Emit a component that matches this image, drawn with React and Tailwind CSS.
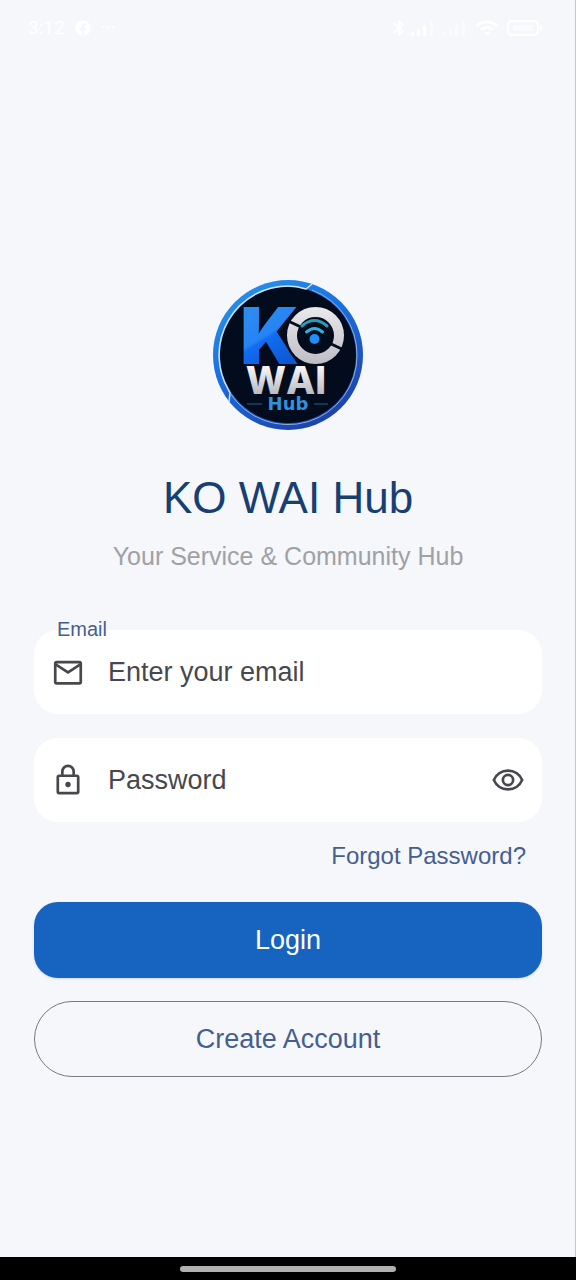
import React, { useState } from 'react';
import { FaFacebook } from 'react-icons/fa';
import { MdBluetooth, MdWifi } from 'react-icons/md';

function StatusBar() {
    return (
        <div className="h-14 pl-7 pr-8 flex items-center justify-between text-white font-[Roboto,sans-serif]">
            <div className="flex items-center gap-2.5">
                <span className="text-[19px] leading-6">3:12</span>
                <FaFacebook size={16} />
                <span className="text-[19px] leading-6">···</span>
            </div>
            <div className="flex items-center gap-2">
                <div className="flex items-center gap-0.5">
                    <MdBluetooth size={20} />
                    <svg width="24" height="16" viewBox="0 0 24 16" fill="currentColor">
                        <rect x="0" y="12" width="3" height="4" rx="1" />
                        <rect x="6" y="9" width="3" height="7" rx="1" />
                        <rect x="12" y="5" width="3" height="11" rx="1" />
                        <rect x="19" y="1" width="3" height="15" rx="1" opacity="0.5" />
                    </svg>
                </div>
                <svg width="24" height="16" viewBox="0 0 24 16" fill="currentColor" opacity="0.6">
                    <rect x="0" y="12" width="3" height="4" rx="1" />
                    <rect x="6" y="9" width="3" height="7" rx="1" />
                    <rect x="12" y="5" width="3" height="11" rx="1" />
                    <rect x="19" y="1" width="3" height="15" rx="1" />
                </svg>
                <MdWifi size={24} />
                <svg width="36" height="16" viewBox="0 0 36 16" fill="none" stroke="currentColor">
                    <rect x="1" y="1" width="30" height="14" rx="4" strokeWidth="2" />
                    <rect x="6" y="5" width="20" height="6" rx="1" fill="currentColor" stroke="none" opacity="0.5" />
                    <path d="M34 6v4" strokeWidth="2" strokeLinecap="round" />
                </svg>
            </div>
        </div>
    );
}

function Logo() {
    return (
        <svg
            className="w-[150px] h-[150px]"
            viewBox="0 0 150 150"
            role="img"
            aria-label="KO WAI Hub logo"
        >
            <defs>
                <linearGradient id="rim" x1="0" y1="0" x2="0.6" y2="1">
                    <stop offset="0" stopColor="#2a9af0" />
                    <stop offset="0.5" stopColor="#1a6fe0" />
                    <stop offset="1" stopColor="#1d44ae" />
                </linearGradient>
                <linearGradient id="blue" gradientUnits="userSpaceOnUse" x1="35" y1="28" x2="72" y2="90">
                    <stop offset="0" stopColor="#2f8cee" />
                    <stop offset="0.45" stopColor="#2584f4" />
                    <stop offset="0.5" stopColor="#126cf2" />
                    <stop offset="1" stopColor="#0d55cc" />
                </linearGradient>
                <linearGradient id="silver" gradientUnits="userSpaceOnUse" x1="0" y1="28" x2="0" y2="84">
                    <stop offset="0" stopColor="#e9e9ec" />
                    <stop offset="1" stopColor="#bdbdc4" />
                </linearGradient>
                <linearGradient id="word" gradientUnits="userSpaceOnUse" x1="0" y1="88" x2="0" y2="113">
                    <stop offset="0" stopColor="#f4f4f6" />
                    <stop offset="1" stopColor="#bcbcc4" />
                </linearGradient>
            </defs>

            <circle cx="75" cy="75" r="75" fill="url(#rim)" />
            <circle cx="75" cy="75" r="68" fill="#020c1c" />
            <path
                d="M99 4L93 9C87 7 81 6 75 6A69 69 0 0 0 15 109L17 113L16 122"
                fill="none"
                stroke="#d5e1ee"
                strokeWidth="1.5"
            />
            <path
                d="M17 113A69 69 0 0 0 144 75A69 69 0 0 0 99 10"
                fill="none"
                stroke="#8eb0dc"
                strokeWidth="1"
            />

            <text x="27" y="84" fontFamily="Inter, sans-serif" fontWeight="900" fontSize="78" fill="url(#blue)">K</text>

            {/* broken ring with the signal inside */}
            <circle cx="102.5" cy="55.5" r="31" fill="#020c1c" />
            <circle cx="102.5" cy="55.5" r="23.500" fill="none" stroke="url(#silver)" strokeWidth="10" />
            <path d="M73 40L90 48M114 62L133 71" stroke="#020c1c" strokeWidth="3" />
            <g fill="none" strokeLinecap="round" strokeWidth="3">
                <path d="M89 46Q101.500 35 114 46" stroke="#249fb5" />
                <path d="M93.500 52Q101.500 45 109.500 52" stroke="#2fb3dc" />
            </g>
            <circle cx="101.500" cy="59" r="5" fill="#1f8dfa" />

            <text
                x="73"
                y="114"
                textAnchor="middle"
                fontFamily="Inter, sans-serif"
                fontWeight="800"
                fontSize="38"
                style={{ fontKerning: 'none' }}
                fill="url(#word)"
            >
                WAI
            </text>
            <text x="75" y="130" textAnchor="middle" fontFamily="'DejaVu Sans', sans-serif" fontWeight="700" fontSize="18" fill="#3291dd">
                Hub
            </text>
            <path d="M34 124H49M101 124H115" stroke="#2b5c96" strokeWidth="1" />
        </svg>
    );
}

function MailIcon() {
    return (
        <svg className="size-[34px] shrink-0" viewBox="0 0 24 24" fill="none" stroke="currentColor" strokeWidth="1.9">
            <rect x="3" y="5" width="18" height="15" rx="1" />
            <path d="M3 6.500L12 12.300L21 6.500" />
        </svg>
    );
}

function LockIcon() {
    return (
        <svg className="size-[34px] shrink-0" viewBox="0 0 24 24" fill="none" stroke="currentColor" strokeWidth="1.9">
            <rect x="4.800" y="9" width="14.400" height="12.300" rx="1" />
            <path d="M8 9V6a4 4 0 0 1 8 0v3" />
            <circle cx="12" cy="15.200" r="1.900" fill="currentColor" stroke="none" />
        </svg>
    );
}

function EyeIcon() {
    return (
        <svg className="size-[34px]" viewBox="0 0 24 24" fill="none" stroke="currentColor" strokeWidth="1.9">
            <path d="M2 12C3.700 8 7.600 5.400 12 5.400S20.300 8 22 12C20.300 16 16.400 18.600 12 18.600S3.700 16 2 12Z" />
            <circle cx="12" cy="12" r="3.600" />
        </svg>
    );
}

export default function App() {
    const [email, setEmail] = useState('');
    const [password, setPassword] = useState('');
    const [showPassword, setShowPassword] = useState(false);

    return (
        <div className="min-h-screen flex flex-col bg-[#f5f7fb] font-['Liberation_Sans',Arial,sans-serif]">
            <div className="flex-1 flex flex-col border-r border-[#c4c6ca]">
                <StatusBar />

                <main className="flex-1 flex flex-col justify-center pl-[34px] pr-[33px] pt-11">
                    <div className="flex flex-col items-center">
                        <Logo />
                        <h1 className="mt-10 text-[44px] leading-14 text-[#173f72]">KO WAI Hub</h1>
                        <p className="mt-3.5 text-[25px] leading-8 text-[#a0a1a4]">
                            Your Service &amp; Community Hub
                        </p>
                    </div>

                    <form className="mt-[58px] flex flex-col" onSubmit={(e) => e.preventDefault()}>
                        <div className="relative h-[84px] px-[17px] flex items-center gap-[23px] rounded-3xl bg-white text-[#46484d]">
                            <label
                                htmlFor="email"
                                className="absolute left-[23px] -top-[11px] text-[20px] leading-5 text-[#455e91]"
                            >
                                Email
                            </label>
                            <MailIcon />
                            <input
                                id="email"
                                type="email"
                                value={email}
                                onChange={(e) => setEmail(e.target.value)}
                                placeholder="Enter your email"
                                className="flex-1 min-w-0 text-[27px] leading-8 outline-none placeholder:text-[#46484d]"
                            />
                        </div>

                        <div className="mt-6 h-[84px] px-[17px] flex items-center gap-[23px] rounded-3xl bg-white text-[#46484d]">
                            <LockIcon />
                            <input
                                type={showPassword ? 'text' : 'password'}
                                aria-label="Password"
                                value={password}
                                onChange={(e) => setPassword(e.target.value)}
                                placeholder="Password"
                                className="flex-1 min-w-0 text-[27px] leading-8 outline-none placeholder:text-[#46484d]"
                            />
                            <button
                                type="button"
                                aria-label="Show password"
                                onClick={() => setShowPassword(!showPassword)}
                            >
                                <EyeIcon />
                            </button>
                        </div>

                        <a href="#forgot" className="mt-[18px] mr-4 self-end text-[24px] leading-8 text-[#455e91]">
                            Forgot Password?
                        </a>

                        <button
                            type="submit"
                            className="mt-[30px] h-[76px] rounded-3xl bg-[#1664c0] text-[27px] leading-8 text-white shadow-sm"
                        >
                            Login
                        </button>
                        <button
                            type="button"
                            className="mt-[23px] h-[76px] rounded-full border border-[#777980] text-[27px] leading-8 text-[#455e91]"
                        >
                            Create Account
                        </button>
                    </form>
                </main>
            </div>

            <div className="h-[23px] flex items-center justify-center bg-black">
                <div className="w-3/8 h-1.5 rounded-full bg-[#b0b0b0]" />
            </div>
        </div>
    );
}
